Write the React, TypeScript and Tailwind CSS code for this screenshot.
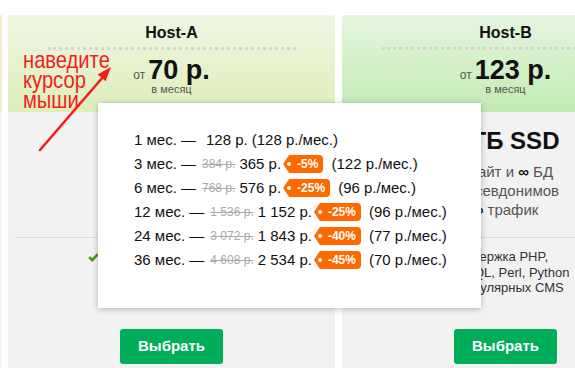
import React from "react";

type Row = {
  months: number;
  old?: string;
  price: string;
  off?: string;
  perMonth: string;
};

const rows: Row[] = [
  { months: 1, price: "128 р.", perMonth: "128" },
  { months: 3, old: "384 р.", price: "365 р.", off: "-5%", perMonth: "122" },
  { months: 6, old: "768 р.", price: "576 р.", off: "-25%", perMonth: "96" },
  { months: 12, old: "1 536 р.", price: "1 152 р.", off: "-25%", perMonth: "96" },
  { months: 24, old: "3 072 р.", price: "1 843 р.", off: "-40%", perMonth: "77" },
  { months: 36, old: "4 608 р.", price: "2 534 р.", off: "-45%", perMonth: "70" },
];

function Check() {
  return (
    <svg width="11" height="9" viewBox="0 0 11 9" className="mt-[4px] shrink-0">
      <path d="M1.2 4.2 L4.2 7.2 L9.8 1.2" fill="none" stroke="#459c0c" strokeWidth="2.6" />
    </svg>
  );
}

function Tag({ text }: { text: string }) {
  return (
    <span className="relative ml-[2px] inline-flex h-[18px] items-center rounded-r-[4px] bg-[#ff6a00] pl-[14px] pr-[5px] text-[12px] font-bold text-white [clip-path:polygon(6px_0,100%_0,100%_100%,6px_100%,0_50%)]">
      <span className="absolute left-[4px] top-[7px] h-[4px] w-[4px] rounded-full bg-white" />
      {text}
    </span>
  );
}

function Card({
  title,
  price,
  headerClass,
  hidden,
}: {
  title: string;
  price: string;
  headerClass: string;
  hidden?: boolean;
}) {
  return (
    <div className="flex w-[327px] shrink-0 flex-col">
      <div className={`flex h-[97px] flex-col items-center rounded-t-[3px] pt-[8px] ${headerClass}`}>
        <div className="text-[16px] leading-5 font-bold text-[#111]">{title}</div>
        <div className="mt-[4px] w-[248px] border-t-[3px] border-dotted border-[#d4d8cb]" />
        <div className="mt-[7px] flex items-baseline leading-none">
          <span className="mr-[3px] text-[12px] text-[#555]">от</span>
          <span className="text-[27px] font-bold text-[#111]">{price}</span>
        </div>
        <div className="text-[11px] leading-[11px] text-[#555]">в месяц</div>
      </div>
      <div className="flex h-[300px] flex-col bg-[#f2f2f2]">
        {hidden ? (
          <div className="h-[107px]" />
        ) : (
          <>
            <div className="pt-[15px] text-center text-[24px] leading-[28px] font-bold text-[#111]">1 ТБ SSD</div>
            <div className="mt-[7px] text-center text-[15px] leading-[19px] text-[#555]">
              <div>
                1 сайт и <b className="text-[#111]">∞</b> БД
              </div>
              <div>
                <b className="text-[#111]">∞</b> псевдонимов
              </div>
              <div>
                <b className="text-[#111]">∞</b> трафик
              </div>
            </div>
          </>
        )}
        <div className="mx-[7px] mt-[18px] h-px bg-[#dcdcdc]" />
        <div className="mt-[11px] flex h-[46.5px] pl-[80px]">
          <Check />
          {!hidden && (
            <div className="ml-[15px] text-[13px] leading-[15.5px] text-[#333]">
              Поддержка PHP,
              <br />
              MySQL, Perl, Python
              <br />и популярных CMS
            </div>
          )}
        </div>
        <div className="mt-[33px] flex justify-center">
          <button className="h-[35px] w-[103px] rounded-[3px] bg-[#00ae5a] text-[15px] font-bold text-white">
            Выбрать
          </button>
        </div>
      </div>
    </div>
  );
}

export default function App() {
  return (
    <div className="relative h-[368px] w-[575px] overflow-hidden bg-white font-['Liberation_Sans',Arial,sans-serif]">
      <div className="flex pt-[15px]">
        <div className="flex w-[2px] shrink-0 flex-col">
          <div className="h-[97px] bg-[#efedd8]" />
          <div className="h-[300px] bg-[#f4f4f4]" />
        </div>
        <div className="ml-[6px] flex gap-[7px]">
          <Card
            title="Host-A"
            price="70 р."
            hidden
            headerClass="bg-gradient-to-b from-[#eff6e2] to-[#dfeebb]"
          />
          <Card
            title="Host-B"
            price="123 р."
            headerClass="bg-gradient-to-b from-[#e5f6e0] to-[#c2ebb3]"
          />
        </div>
      </div>

      {/* annotation */}
      <div className="absolute left-[23px] top-[50px] origin-left scale-x-[0.84] text-[24px] leading-[20px] text-[#f01e1e]">
        наведите
        <br />
        курсор
        <br />
        мыши
      </div>
      <svg className="pointer-events-none absolute left-0 top-0" width="575" height="368">
        <line x1="40" y1="150" x2="103" y2="77" stroke="#f01e1e" strokeWidth="2.6" strokeLinecap="round" />
        <polygon points="111,67 105.6,81.3 97.6,74.5" fill="#f01e1e" />
      </svg>

      {/* price popup */}
      <div className="absolute left-[98px] top-[103px] h-[205px] w-[383px] bg-white pl-[36px] pt-[25px] shadow-[0_1px_6px_rgba(0,0,0,0.28)]">
        {rows.map((r) => (
          <div key={r.months} className="flex h-6 items-center whitespace-nowrap text-[15px] text-[#111]">
            <span>{r.months} мес. —</span>
            {r.old && <span className="ml-[6px] text-[12px] text-[#aaa] line-through">{r.old}</span>}
            <span className={r.old ? "ml-[4px]" : "ml-[10px]"}>{r.price}</span>
            {r.off && <Tag text={r.off} />}
            <span className={r.off ? "ml-2" : "ml-1"}>({r.perMonth} р./мес.)</span>
          </div>
        ))}
      </div>
    </div>
  );
}
